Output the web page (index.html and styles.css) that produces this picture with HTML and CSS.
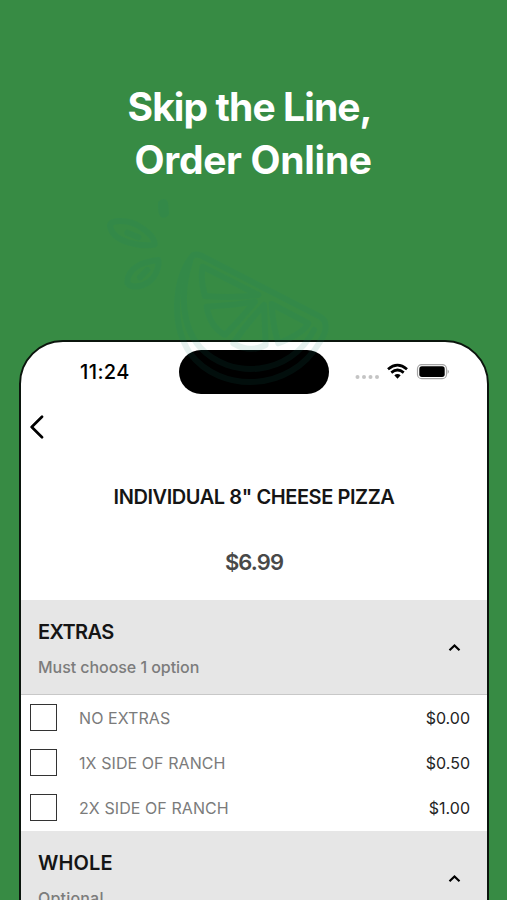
FILE: index.html
```html
<!DOCTYPE html>
<html lang="en">
<head>
<meta charset="utf-8">
<title>Order Online</title>
<link rel="stylesheet" href="styles.css">
</head>
<body>
<main class="promo">
  <h1 class="headline"><span class="line1">Skip the Line,</span><span class="line2">Order Online</span></h1>
  <section class="phone">
    <div class="status">
      <span class="time">11:24</span>
      <span class="island"></span>
      <svg class="signals" width="96" height="20" viewBox="0 0 96 20">
        <g fill="#c4c4c4"><circle cx="4.5" cy="16" r="2"/><circle cx="11" cy="16" r="2"/><circle cx="17.5" cy="16" r="2"/><circle cx="24" cy="16" r="2"/></g>
        <g fill="none" stroke="#000" stroke-width="2.7"><path d="M35 8.2Q44.5 0 54 8.2"/><path d="M38.3 11.6Q44.5 6.4 50.7 11.6"/></g>
        <path d="M41.3 14.3Q44.5 11.8 47.7 14.3L44.5 17.8z"/>
        <rect x="64.5" y="3.6" width="29" height="14" rx="4.2" fill="#fff" stroke="#a5a5a5" stroke-width="1.2"/>
        <rect x="66.3" y="5.3" width="25.4" height="10.6" rx="2.6"/>
        <path d="M94.7 8.5q2 2.2 0 4.4z" fill="#888"/>
      </svg>
    </div>
    <div class="nav"><svg width="16" height="24" viewBox="0 0 16 24"><path d="M13 1.8L2.7 12L13 22.2" fill="none" stroke="#000" stroke-width="2.7" stroke-linecap="round" stroke-linejoin="round"/></svg></div>
    <h2 class="item">INDIVIDUAL 8" CHEESE PIZZA</h2>
    <p class="price">$6.99</p>
    <div class="group">
      <div><h3 class="extras">EXTRAS</h3><p class="must">Must choose 1 option</p></div>
      <svg class="caret" width="13" height="9" viewBox="0 0 13 9"><path d="M1.5 7.2L6.5 2.4L11.5 7.2" fill="none" stroke="#000" stroke-width="2.2"/></svg>
    </div>
    <ul class="options">
      <li><i class="box"></i><span class="o1">NO EXTRAS</span><b>$0.00</b></li>
      <li><i class="box"></i><span class="o2">1X SIDE OF RANCH</span><b>$0.50</b></li>
      <li><i class="box"></i><span class="o3">2X SIDE OF RANCH</span><b>$1.00</b></li>
    </ul>
    <div class="group">
      <div><h3 class="whole">WHOLE</h3><p class="optional">Optional</p></div>
      <svg class="caret" width="13" height="9" viewBox="0 0 13 9"><path d="M1.5 7.2L6.5 2.4L11.5 7.2" fill="none" stroke="#000" stroke-width="2.2"/></svg>
    </div>
  </section>
  <svg class="lime" width="250" height="220" viewBox="0 0 750 660">
    <g fill="none" stroke="#177f70" stroke-width="18" stroke-linejoin="round" stroke-linecap="round">
      <path d="M60 108C58 88 115 88 150 110C185 132 195 148 194 164C160 170 68 160 60 108Z"/>
      <path d="M205 210C160 215 112 232 112 278C125 300 170 288 190 262C203 243 208 227 205 210Z"/>
      <path d="M213 40Q225 30 226 45L228 70Q218 80 214 65Z"/>
      <path d="M112 128L145 142M150 262L172 240"/>
      <path d="M310 195C255 260 240 400 300 490C390 610 600 610 690 455C715 420 710 390 690 380L345 203Q325 190 310 195Z"/>
      <path d="M300 215C270 310 275 410 330 472C420 570 600 560 672 420"/>
      <path d="M338 230L505 315Q430 325 345 318Q330 270 338 230Z"/>
      <path d="M350 350Q440 345 495 335Q455 385 405 435Q360 410 350 350Z"/>
      <path d="M522 345L527 465Q480 490 430 460Q470 400 522 345Z"/>
      <path d="M545 342L655 400Q640 430 565 460Q548 405 545 342Z"/>
    </g>
  </svg>
</main>
</body>
</html>
```

FILE: styles.css
```css
* { box-sizing: border-box; }
body { margin: 0; background: #378b44; font-family: Inter, "Liberation Sans", sans-serif; }
h1, h2, h3, p, ul { margin: 0; padding: 0; }
.promo { position: relative; height: 900px; overflow: hidden; padding-top: 80px; display: flex; flex-direction: column; align-items: center; background: #378b44; }
.headline { width: 252px; height: 260px; flex: none; color: #fff; font-size: 39px; line-height: 53px; font-weight: 700; white-space: nowrap; }
.headline span { display: block; width: max-content; }
.line1 { letter-spacing: -.9px; }
.line2 { letter-spacing: -.3px; margin-left: 7px; }
.phone { flex: none; width: 470px; margin-left: 1px; height: 620px; border: 2px solid #0b150d; border-radius: 44px 44px 0 0; background: #fff; overflow: hidden; color: #151515; }
.status { height: 60px; padding: 8px 37px 0 59px; display: flex; align-items: flex-start; }
.time { width: 99px; font-size: 20px; line-height: 44px; font-weight: 500; letter-spacing: .4px; color: #000; }
.island { width: 150px; height: 44px; border-radius: 22px; background: #000; }
.signals { margin: 11px 0 0 24px; flex: none; }
.nav { height: 78px; padding: 13px 0 0 8px; }
.item { text-align: center; font-size: 20px; line-height: 34px; font-weight: 600; letter-spacing: -.42px; white-space: nowrap; }
.price { height: 86px; padding-top: 31px; text-align: center; font-size: 22px; line-height: 34px; font-weight: 600; letter-spacing: -.9px; color: #484848; }
.group { height: 95px; background: #e6e6e6; border-bottom: 1px solid #c8c8c8; padding: 17px 26px 0 17px; display: flex; justify-content: space-between; }
.group h3 { font-size: 20px; line-height: 30px; font-weight: 600; }
.group .extras { letter-spacing: -.6px; }
.group .whole { letter-spacing: .1px; }
.group p { font-size: 16px; line-height: 20px; margin-top: 10px; font-weight: 500; letter-spacing: -.05px; color: #7c7c7c; }
.group .optional { letter-spacing: .2px; }
.caret { margin-top: 26px; }
.options { list-style: none; height: 136px; }
.options li { height: 45.2px; display: flex; align-items: center; padding: 0 17px 0 9px; font-size: 16px; color: #7b7b7b; }
.box { width: 27px; height: 27px; border: 1px solid #333; margin-right: 22px; }
.options span { letter-spacing: .08px; }
.options b { margin-left: auto; font-weight: 400; color: #242424; }
.lime { position: absolute; left: 90px; top: 190px; opacity: .11; filter: blur(.7px); }
```
